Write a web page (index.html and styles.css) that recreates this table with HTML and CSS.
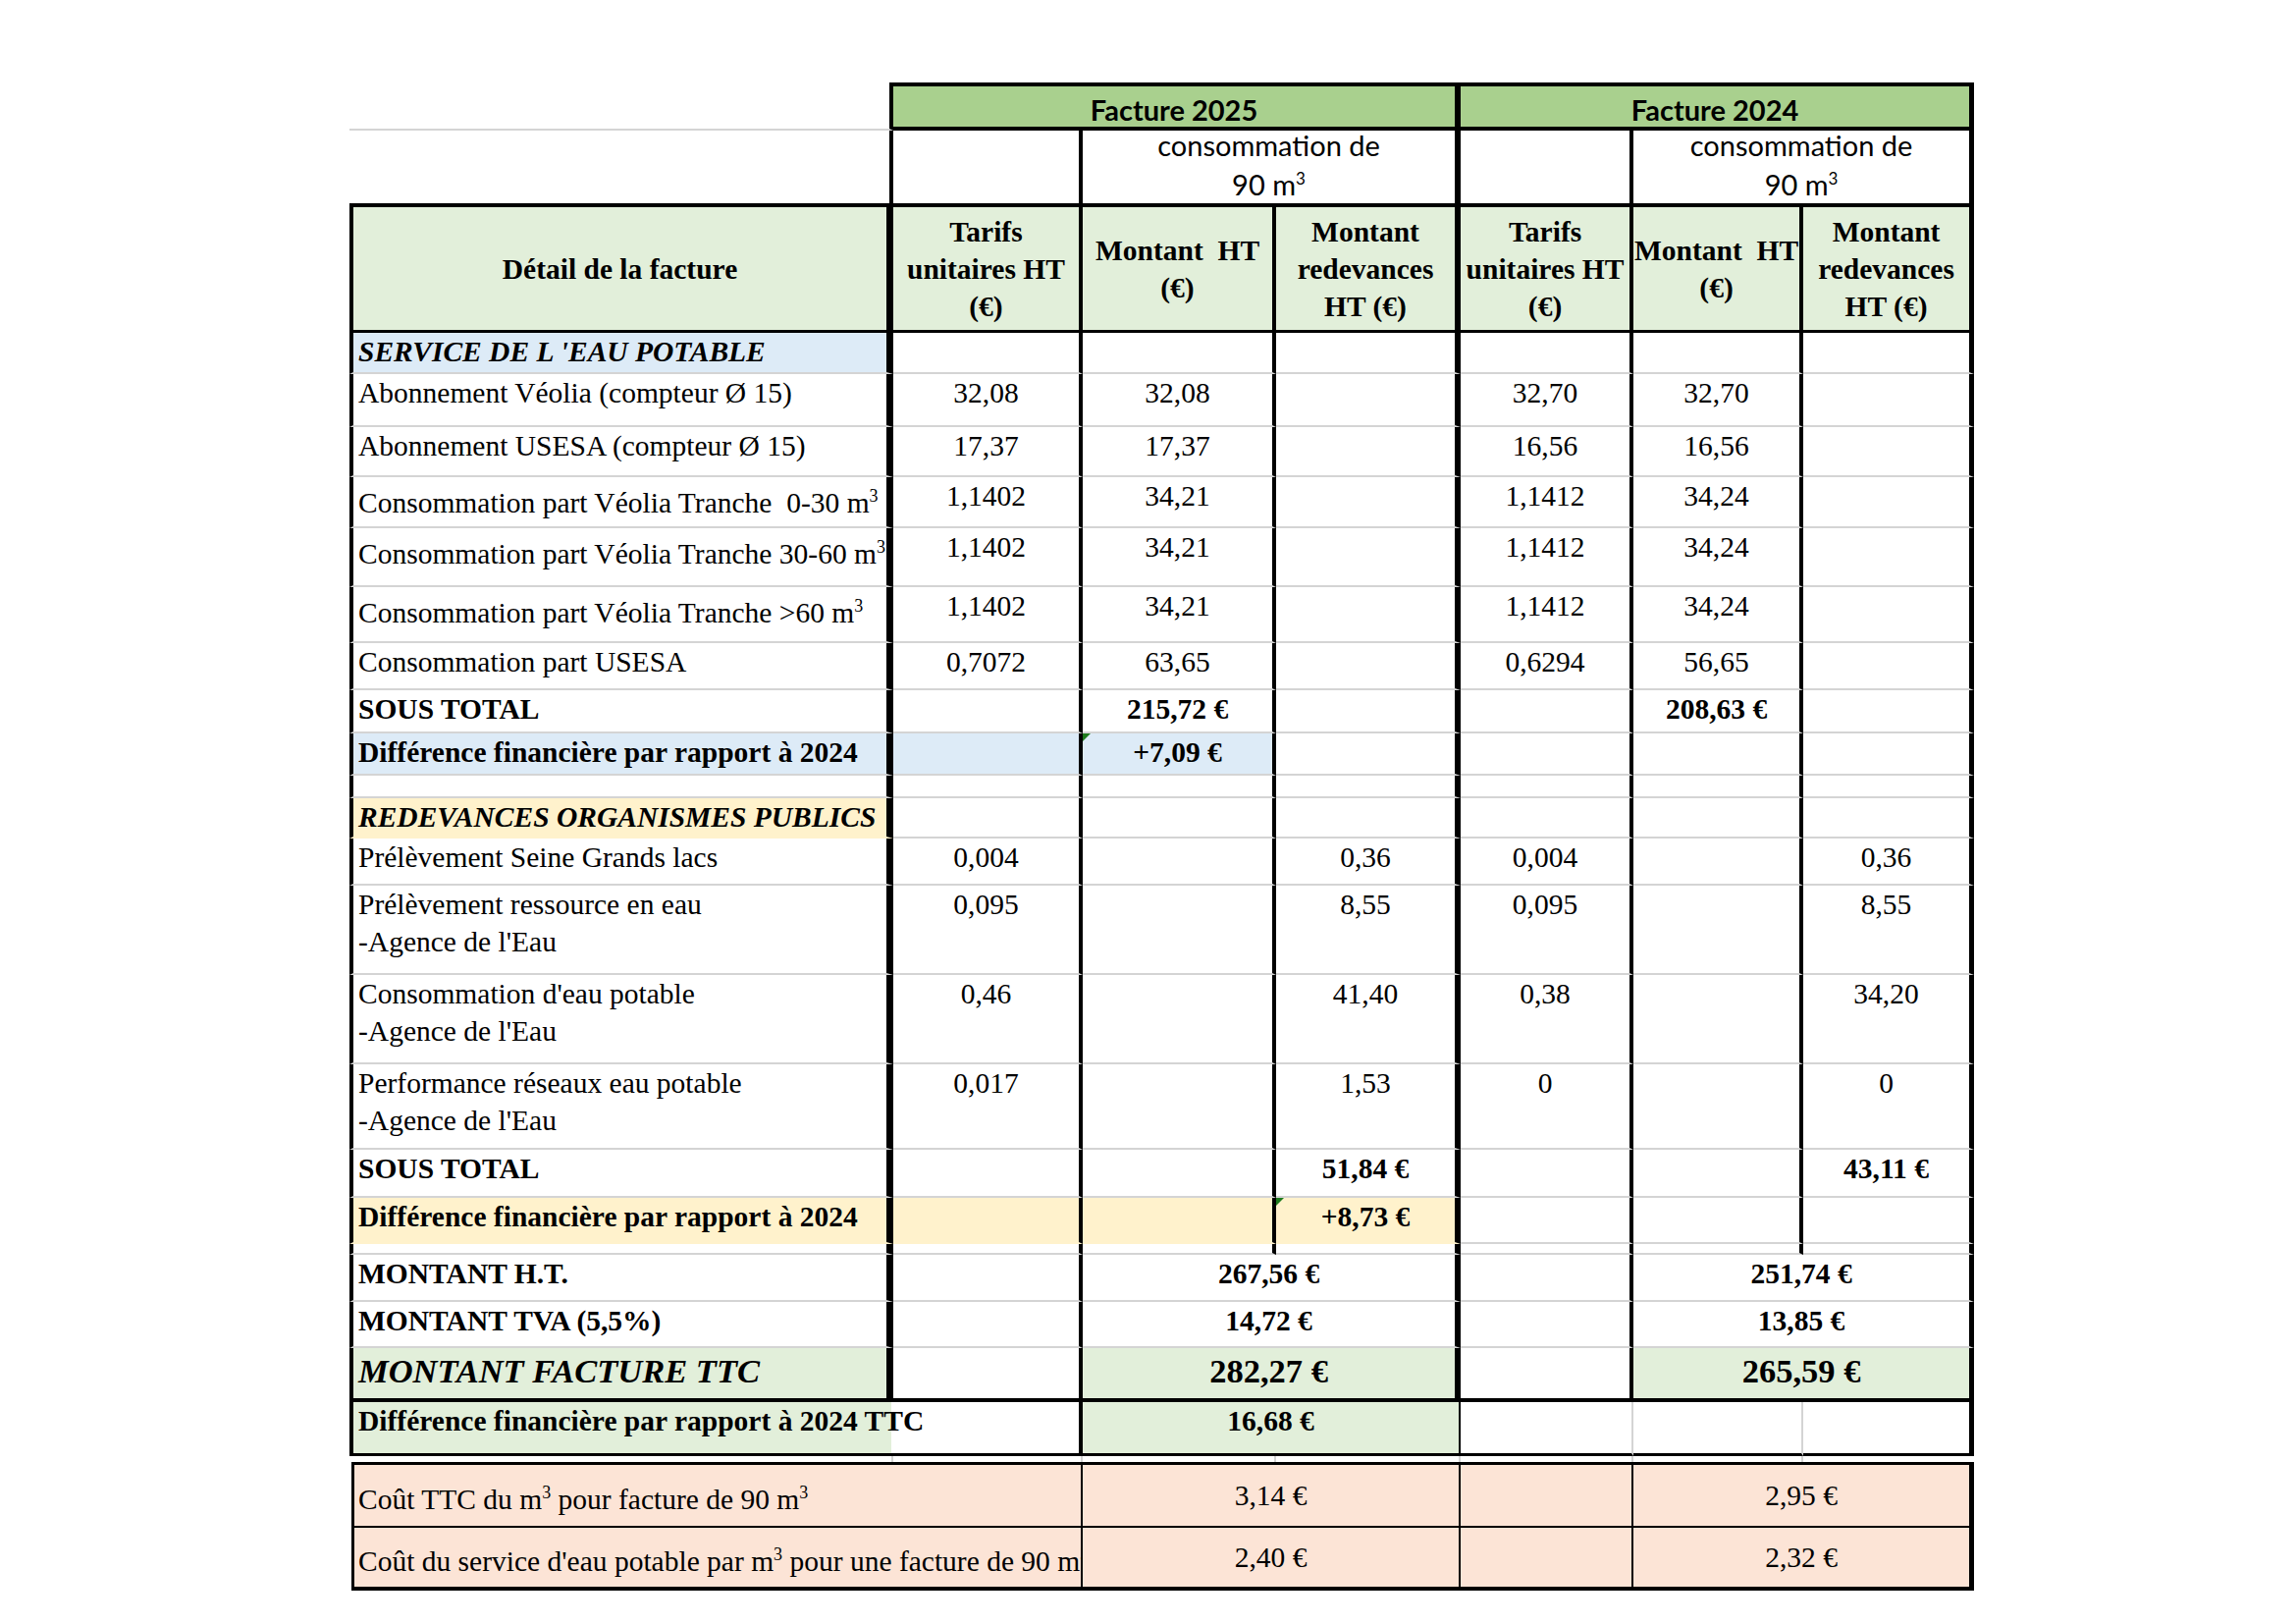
FILE: index.html
```html
<!DOCTYPE html>
<html lang="fr">
<head>
<meta charset="utf-8">
<title>Détail de la facture d'eau</title>
<link rel="stylesheet" href="styles.css">
</head>
<body>
<div class="sheet">
<table class="grid">
  <colgroup>
    <col class="w-lab"><col class="w-t"><col class="w-m"><col class="w-r"><col class="w-t4"><col class="w-m4"><col class="w-r4">
  </colgroup>
  <tr class="r-fact">
    <td class="blank"></td>
    <td colspan="3" class="fact c4">Facture 2025</td>
    <td colspan="3" class="fact cR">Facture 2024</td>
  </tr>
  <tr class="r-conso">
    <td class="blank"></td>
    <td class="c2"></td>
    <td colspan="2" class="conso c4"><span class="l1">consommation de</span><span class="l2">90 m<sup>3</sup></span></td>
    <td class="c5"></td>
    <td colspan="2" class="conso cR"><span class="l1">consommation de</span><span class="l2">90 m<sup>3</sup></span></td>
  </tr>
  <tr class="r-head">
    <th class="lab">Détail de la facture</th>
    <th class="c2">Tarifs<br>unitaires HT<br>(€)</th>
    <th class="c3">Montant&nbsp; HT<br>(€)</th>
    <th class="c4">Montant<br>redevances<br>HT (€)</th>
    <th class="c5">Tarifs<br>unitaires HT<br>(€)</th>
    <th class="c6">Montant&nbsp; HT<br>(€)</th>
    <th class="cR">Montant<br>redevances<br>HT (€)</th>
  </tr>
  <tr class="rh-42">
    <td class="lab fb bi">SERVICE DE L 'EAU POTABLE</td>
    <td class="c2"></td><td class="c3"></td><td class="c4"></td><td class="c5"></td><td class="c6"></td><td class="cR"></td>
  </tr>
  <tr class="rh-54">
    <td class="lab">Abonnement Véolia (compteur Ø 15)</td>
    <td class="c2">32,08</td><td class="c3">32,08</td><td class="c4"></td><td class="c5">32,70</td><td class="c6">32,70</td><td class="cR"></td>
  </tr>
  <tr class="rh-51">
    <td class="lab">Abonnement USESA (compteur Ø 15)</td>
    <td class="c2">17,37</td><td class="c3">17,37</td><td class="c4"></td><td class="c5">16,56</td><td class="c6">16,56</td><td class="cR"></td>
  </tr>
  <tr class="rh-52">
    <td class="lab">Consommation part Véolia Tranche &nbsp;0-30 m<sup>3</sup></td>
    <td class="c2">1,1402</td><td class="c3">34,21</td><td class="c4"></td><td class="c5">1,1412</td><td class="c6">34,24</td><td class="cR"></td>
  </tr>
  <tr class="rh-60">
    <td class="lab">Consommation part Véolia Tranche 30-60 m<sup>3</sup></td>
    <td class="c2">1,1402</td><td class="c3">34,21</td><td class="c4"></td><td class="c5">1,1412</td><td class="c6">34,24</td><td class="cR"></td>
  </tr>
  <tr class="rh-57">
    <td class="lab">Consommation part Véolia Tranche &gt;60 m<sup>3</sup></td>
    <td class="c2">1,1402</td><td class="c3">34,21</td><td class="c4"></td><td class="c5">1,1412</td><td class="c6">34,24</td><td class="cR"></td>
  </tr>
  <tr class="rh-48">
    <td class="lab">Consommation part USESA</td>
    <td class="c2">0,7072</td><td class="c3">63,65</td><td class="c4"></td><td class="c5">0,6294</td><td class="c6">56,65</td><td class="cR"></td>
  </tr>
  <tr class="rh-44">
    <td class="lab b">SOUS TOTAL</td>
    <td class="c2"></td><td class="c3 b">215,72 €</td><td class="c4"></td><td class="c5"></td><td class="c6 b">208,63 €</td><td class="cR"></td>
  </tr>
  <tr class="rh-43">
    <td class="lab fb b">Différence financière par rapport à 2024</td>
    <td class="c2 fb"></td><td class="c3 fb b tri">+7,09 €</td><td class="c4"></td><td class="c5"></td><td class="c6"></td><td class="cR"></td>
  </tr>
  <tr class="rh-23">
    <td class="lab"></td>
    <td class="c2"></td><td class="c3"></td><td class="c4"></td><td class="c5"></td><td class="c6"></td><td class="cR"></td>
  </tr>
  <tr class="rh-41">
    <td class="lab fo bi">REDEVANCES ORGANISMES PUBLICS</td>
    <td class="c2"></td><td class="c3"></td><td class="c4"></td><td class="c5"></td><td class="c6"></td><td class="cR"></td>
  </tr>
  <tr class="rh-48">
    <td class="lab">Prélèvement Seine Grands lacs</td>
    <td class="c2">0,004</td><td class="c3"></td><td class="c4">0,36</td><td class="c5">0,004</td><td class="c6"></td><td class="cR">0,36</td>
  </tr>
  <tr class="rh-91">
    <td class="lab">Prélèvement ressource en eau<br>-Agence de l'Eau</td>
    <td class="c2">0,095</td><td class="c3"></td><td class="c4">8,55</td><td class="c5">0,095</td><td class="c6"></td><td class="cR">8,55</td>
  </tr>
  <tr class="rh-91">
    <td class="lab">Consommation d'eau potable<br>-Agence de l'Eau</td>
    <td class="c2">0,46</td><td class="c3"></td><td class="c4">41,40</td><td class="c5">0,38</td><td class="c6"></td><td class="cR">34,20</td>
  </tr>
  <tr class="rh-87">
    <td class="lab">Performance réseaux eau potable<br>-Agence de l'Eau</td>
    <td class="c2">0,017</td><td class="c3"></td><td class="c4">1,53</td><td class="c5">0</td><td class="c6"></td><td class="cR">0</td>
  </tr>
  <tr class="rh-49">
    <td class="lab b">SOUS TOTAL</td>
    <td class="c2"></td><td class="c3"></td><td class="c4 b">51,84 €</td><td class="c5"></td><td class="c6"></td><td class="cR b">43,11 €</td>
  </tr>
  <tr class="rh-47">
    <td class="lab fo b">Différence financière par rapport à 2024</td>
    <td class="c2 fo"></td><td class="c3 fo"></td><td class="c4 fo b tri">+8,73 €</td><td class="c5"></td><td class="c6"></td><td class="cR"></td>
  </tr>
  <tr class="rh-11">
    <td class="lab"></td>
    <td class="c2"></td><td class="c3"></td><td class="c4"></td><td class="c5"></td><td class="c6"></td><td class="cR"></td>
  </tr>
  <tr class="rh-48">
    <td class="lab b">MONTANT H.T.</td>
    <td class="c2"></td><td colspan="2" class="c4 b">267,56 €</td><td class="c5"></td><td colspan="2" class="cR b">251,74 €</td>
  </tr>
  <tr class="rh-47">
    <td class="lab b">MONTANT TVA (5,5%)</td>
    <td class="c2"></td><td colspan="2" class="c4 b">14,72 €</td><td class="c5"></td><td colspan="2" class="cR b">13,85 €</td>
  </tr>
  <tr class="r-ttc">
    <td class="lab fg bi">MONTANT FACTURE TTC</td>
    <td class="c2"></td><td colspan="2" class="c4 fg b">282,27 €</td><td class="c5"></td><td colspan="2" class="cR fg b">265,59 €</td>
  </tr>
  <tr class="r-difttc">
    <td colspan="2" class="lab-ttc b">Différence financière par rapport à 2024 TTC</td>
    <td colspan="2" class="fg b thin-r">16,68 €</td>
    <td class="gray-r"></td><td class="gray-r"></td><td class="cR"></td>
  </tr>
</table>
<table class="cost">
  <colgroup>
    <col class="w-lab2"><col class="w-t"><col class="w-m"><col class="w-r"><col class="w-t4"><col class="w-m4"><col class="w-r4">
  </colgroup>
  <tr class="r-gap">
    <td></td><td></td><td></td><td></td><td></td><td></td><td class="last"></td>
  </tr>
  <tr class="r-cost1">
    <td colspan="2" class="cl">Coût TTC du m<sup>3</sup> pour facture de 90 m<sup>3</sup></td>
    <td colspan="2" class="cv">3,14 €</td>
    <td class="cv"></td>
    <td colspan="2" class="cv end">2,95 €</td>
  </tr>
  <tr class="r-cost2">
    <td colspan="2" class="cl">Coût du service d'eau potable par m<sup>3</sup> pour une facture de 90 m<sup>3</sup></td>
    <td colspan="2" class="cv">2,40 €</td>
    <td class="cv"></td>
    <td colspan="2" class="cv end">2,32 €</td>
  </tr>
</table>
</div>
</body>
</html>
```

FILE: styles.css
```css
* { box-sizing: border-box; }
html, body { margin: 0; padding: 0; background: #ffffff; }

.sheet { padding: 84px 0 0 356px; }

.grid, .cost {
  border-collapse: separate;
  border-spacing: 0;
  table-layout: fixed;
  font-family: "Liberation Serif", "Times New Roman", serif;
  font-size: 29.5px;
  line-height: 38px;
  color: #000;
}
.grid { width: 1655px; }
.cost { width: 1653px; margin-left: 2px; }

col.w-lab { width: 554px; }
col.w-lab2 { width: 552px; }
col.w-t { width: 193px; }
col.w-m { width: 197px; }
col.w-r { width: 188px; }
col.w-t4 { width: 176px; }
col.w-m4 { width: 173px; }
col.w-r4 { width: 174px; }

td, th {
  padding: 0;
  border: 0 solid #000;
  border-bottom: 2px solid #d4d4d4;
  vertical-align: top;
  text-align: center;
  font-weight: normal;
  white-space: nowrap;
}

sup { font-size: 18px; vertical-align: super; line-height: inherit; }

/* vertical rules (right edges of each column) */
.lab { border-left: 4px solid #000; border-right: 7px solid #000; text-align: left; padding-left: 5px; }
.c2 { border-right: 4px solid #000; }
.c3 { border-right: 4px solid #000; }
.c4 { border-right: 6px solid #000; }
.c5 { border-right: 4px solid #000; }
.c6 { border-right: 4px solid #000; }
.cR { border-right: 5px solid #000; }

/* text styles */
.b { font-weight: bold; }
.bi { font-weight: bold; font-style: italic; }

/* fills */
.fb { background: #ddebf7; }
.fo { background: #fff2cc; border-bottom-color: #fff2cc; }
.fg { background: #e2efda; }

/* Excel error indicator */
.tri { position: relative; }
.tri::before {
  content: "";
  position: absolute;
  left: 0;
  top: 0;
  width: 0;
  height: 0;
  border-top: 8px solid #1e7b1e;
  border-right: 8px solid transparent;
}

/* top block : Facture 2025 / 2024 */
.r-fact { height: 49px; }
.r-fact td { border-bottom: 4px solid #000; }
.r-fact .blank { border-bottom: 2px solid #d4d4d4; border-right: 4px solid #000; }
.fact {
  background: #a9d08e;
  border-top: 4px solid #000;
  font-family: Lato, "Open Sans", sans-serif;
  font-weight: bold;
  font-size: 29px;
  line-height: 34px;
  vertical-align: middle;
  padding-top: 6px;
}

.r-conso { height: 78px; }
.r-conso td { border-bottom: 4px solid #000; }
.r-conso .blank { border-right: 4px solid #000; }
.conso {
  font-family: Lato, "Open Sans", sans-serif;
  font-size: 29px;
  line-height: 30px;
}
.conso .l1, .conso .l2 { display: block; }
.conso .l2 { margin-top: 4px; }
.conso sup { font-size: 17px; }

/* column headers */
.r-head { height: 128px; }
.r-head th {
  background: #e2efda;
  font-weight: bold;
  vertical-align: middle;
  border-bottom: 3px solid #000;
}
.r-head th.lab { text-align: center; padding-left: 0; }

/* body row heights */
.rh-11 { height: 11px; }
.rh-23 { height: 23px; }
.rh-41 { height: 41px; }
.rh-42 { height: 42px; }
.rh-43 { height: 43px; }
.rh-44 { height: 44px; }
.rh-47 { height: 47px; }
.rh-48 { height: 48px; }
.rh-49 { height: 49px; }
.rh-51 { height: 51px; }
.rh-52 { height: 52px; }
.rh-54 { height: 54px; }
.rh-57 { height: 57px; }
.rh-60 { height: 60px; }
.rh-87 { height: 87px; }
.rh-91 { height: 91px; }

/* total TTC */
.r-ttc { height: 55px; }
.r-ttc td { font-size: 34.5px; padding-top: 4px; border-bottom: 4px solid #000; }

/* difference TTC */
.r-difttc { height: 55px; }
.r-difttc td { border-bottom: 3px solid #000; }
.lab-ttc {
  text-align: left;
  padding-left: 5px;
  border-left: 4px solid #000;
  border-right: 4px solid #000;
  background: linear-gradient(90deg, #e2efda 0, #e2efda 548px, #ffffff 548px);
}
.thin-r { border-right: 2px solid #000; }
.gray-r { border-right: 2px solid #d4d4d4; }

/* cost box */
.r-gap { height: 6px; }
.r-gap td { border-bottom: 0; border-right: 2px solid #d4d4d4; }
.r-gap td.last { border-right: 0; }

.r-cost1 { height: 67px; }
.r-cost2 { height: 64px; }
.cost .cl, .cost .cv {
  background: #fce4d6;
  vertical-align: middle;
  border-bottom: 2px solid #000;
  border-right: 2px solid #000;
}
.r-cost1 td { border-top: 3px solid #000; }
.cost .cl {
  border-left: 3px solid #000;
  text-align: left;
  padding-left: 4px;
  overflow: hidden;
  text-overflow: clip;
}
.cost .cv.end { border-right: 5px solid #000; }
.r-cost2 .cl, .r-cost2 .cv { border-bottom-width: 4px; }
```
